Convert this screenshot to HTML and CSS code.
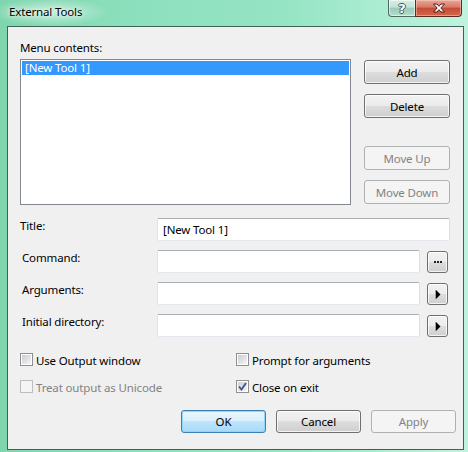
FILE: index.html
```html
<!DOCTYPE html>
<html>
<head>
<meta charset="utf-8">
<link rel="stylesheet" href="styles.css">
</head>
<body>
<div class="window">
  <div class="titlebar">
    <span class="title">External Tools</span>
    <div class="caption-buttons">
      <div class="cap-btn help"><span>?</span></div>
      <div class="cap-btn close">
        <svg width="14" height="10" viewBox="0 0 14 10"><path d="M1.5 1 H5 L7 3.3 L9 1 H12.5 L8.8 5 L12.5 9 H9 L7 6.7 L5 9 H1.5 L5.2 5 Z" fill="#fff" stroke="#4a1c14" stroke-width="1" stroke-linejoin="round"/></svg>
      </div>
    </div>
  </div>
  <div class="client">
    <div class="top">
      <div class="list-col">
        <div class="label">Menu contents:</div>
        <div class="listbox">
          <div class="list-item selected">[New Tool 1]</div>
        </div>
      </div>
      <div class="side-buttons">
        <button class="btn side">Add</button>
        <button class="btn side">Delete</button>
        <button class="btn side disabled move-up">Move Up</button>
        <button class="btn side disabled">Move Down</button>
      </div>
    </div>

    <div class="fields">
      <div class="row">
        <div class="field-label first">Title:</div>
        <div class="textbox wide"><span>[New Tool 1]</span></div>
      </div>
      <div class="row">
        <div class="field-label">Command:</div>
        <div class="textbox"></div>
        <button class="btn small">
          <svg width="8" height="2" viewBox="0 0 8 2"><rect x="0" y="0" width="2" height="2" fill="#222"/><rect x="3" y="0" width="2" height="2" fill="#222"/><rect x="6" y="0" width="2" height="2" fill="#222"/></svg>
        </button>
      </div>
      <div class="row">
        <div class="field-label">Arguments:</div>
        <div class="textbox"></div>
        <button class="btn small">
          <svg width="6" height="9" viewBox="0 0 6 9"><rect x="0" y="0" width="1" height="9" fill="#e0902c"/><path d="M1 0 L5.5 4.5 L1 9 Z" fill="#000"/></svg>
        </button>
      </div>
      <div class="row">
        <div class="field-label">Initial directory:</div>
        <div class="textbox"></div>
        <button class="btn small">
          <svg width="6" height="9" viewBox="0 0 6 9"><rect x="0" y="0" width="1" height="9" fill="#e0902c"/><path d="M1 0 L5.5 4.5 L1 9 Z" fill="#000"/></svg>
        </button>
      </div>
    </div>

    <div class="checks">
      <label class="check"><span class="box"></span>Use Output window</label>
      <label class="check"><span class="box"></span>Prompt for arguments</label>
      <label class="check disabled"><span class="box"></span>Treat output as Unicode</label>
      <label class="check"><span class="box checked"><svg width="9" height="9" viewBox="0 0 9 9"><path d="M1 4.5 L3.5 7.5 L8 1" fill="none" stroke="#3d5596" stroke-width="1.8"/></svg></span>Close on exit</label>
    </div>

    <div class="dialog-buttons">
      <button class="btn dlg default">OK</button>
      <button class="btn dlg">Cancel</button>
      <button class="btn dlg disabled">Apply</button>
    </div>
  </div>
</div>
</body>
</html>
```

FILE: styles.css
```css
html, body {
  margin: 0;
  padding: 0;
}
body {
  width: 468px;
  height: 452px;
  overflow: hidden;
  font-family: "Noto Sans", "DejaVu Sans", sans-serif;
  font-size: 11.5px;
  letter-spacing: -0.15px;
  color: #000;
}
.window {
  width: 468px;
  height: 452px;
  box-sizing: border-box;
  padding: 0 4px 2px 7px;
  display: flex;
  flex-direction: column;
  background:
    radial-gradient(ellipse 60px 14px at 50px 12px, rgba(255,255,255,0.55), rgba(255,255,255,0) 100%),
    linear-gradient(90deg, #7fd6ae 0%, #8de0bd 30%, #95e4c4 60%, #aeeed5 85%, #c0f3df 100%);
}
.titlebar {
  height: 26px;
  display: flex;
  align-items: flex-start;
}
.title {
  margin-top: 4px;
  margin-left: 2px;
  line-height: 15px;
  text-shadow: 0 0 6px rgba(255,255,255,0.9), 0 0 3px rgba(255,255,255,0.8);
}
.caption-buttons {
  margin-left: auto;
  margin-right: 2px;
  display: flex;
}
.cap-btn {
  height: 17px;
  box-sizing: border-box;
  display: flex;
  align-items: center;
  justify-content: center;
  border: 1px solid #4d6b60;
  border-top: none;
}
.cap-btn.help {
  width: 27px;
  border-radius: 0 0 0 4px;
  border-right: none;
  background: linear-gradient(#d6efe6 0%, #c1e3d6 45%, #9ccbb8 50%, #b3dccb 100%);
  box-shadow: inset 0 0 0 1px rgba(255,255,255,0.55);
}
.cap-btn.help span {
  font-family: "DejaVu Sans", sans-serif;
  font-weight: bold;
  font-size: 13px;
  line-height: 13px;
  letter-spacing: 0;
  color: #fff;
  text-shadow: 1px 0 0 #3e5a50, -1px 0 0 #3e5a50, 0 1px 0 #3e5a50, 0 -1px 0 #3e5a50;
}
.cap-btn.close {
  width: 47px;
  border-radius: 0 0 4px 0;
  border-color: #5e2a20;
  background: linear-gradient(#e8a898 0%, #d97865 45%, #c74a32 50%, #d2674f 100%);
  box-shadow: inset 0 0 0 1px rgba(255,220,210,0.45);
}
.client {
  flex: 1;
  background: #f0f0f0;
  border: 1px solid #3e6256;
  padding: 13px 0 0 12px;
  box-sizing: border-box;
}
.top {
  display: flex;
  gap: 13px;
}
.list-col {
  width: 331px;
}
.label {
  line-height: 15px;
  height: 15px;
}
.listbox {
  margin-top: 4px;
  height: 146px;
  box-sizing: border-box;
  border: 1px solid #828790;
  background: #fff;
  padding: 1px;
}
.list-item {
  height: 14px;
  line-height: 14px;
  padding-left: 3px;
}
.list-item.selected {
  background: #3399ff;
  color: #fff;
}
.side-buttons {
  display: flex;
  flex-direction: column;
  gap: 10px;
  padding-top: 20px;
}
.side-buttons .move-up {
  margin-top: 18px;
}
.btn {
  font-family: inherit;
  font-size: 11.5px;
  letter-spacing: -0.15px;
  color: #000;
  box-sizing: border-box;
  border: 1px solid #707070;
  border-radius: 3px;
  background: linear-gradient(#f2f2f2 0%, #ebebeb 48%, #dddddd 50%, #cfcfcf 100%);
  box-shadow: inset 0 0 0 1px rgba(255,255,255,0.75);
  padding: 0;
  margin: 0;
  display: flex;
  align-items: center;
  justify-content: center;
}
.btn.disabled {
  border-color: #adb2b5;
  background: #f4f4f4;
  color: #838383;
  box-shadow: none;
}
.btn.default {
  border-color: #3c7fb1;
  background: linear-gradient(#eaf6fd 0%, #d9f0fc 48%, #bee6fd 50%, #a7d9f5 100%);
  box-shadow: inset 0 0 0 1px #8fd8f8;
}
.btn.side {
  width: 86px;
  height: 24px;
}
.fields {
  margin-top: 13px;
  display: flex;
  flex-direction: column;
  gap: 9px;
}
.row {
  display: flex;
  align-items: flex-start;
  height: 23px;
}
.field-label {
  width: 135px;
  padding-left: 2px;
  line-height: 15px;
}
.field-label.first {
  padding-left: 0;
  width: 137px;
}
.textbox {
  width: 263px;
  height: 23px;
  box-sizing: border-box;
  background: #fff;
  border: 1px solid;
  border-color: #abadb3 #dbdfe6 #e3e9ef #e2e3ea;
  border-radius: 2px;
  padding: 3px 0 0 5px;
  line-height: 15px;
}
.textbox.wide {
  width: 293px;
}
.btn.small {
  width: 21px;
  height: 22px;
  margin-left: 7px;
  margin-top: 1px;
}
.btn.small svg {
  display: block;
}
.checks {
  margin-top: 16px;
  display: grid;
  grid-template-columns: 216px 200px;
  row-gap: 12px;
}
.check {
  display: flex;
  align-items: flex-start;
  line-height: 15px;
  height: 15px;
}
.box {
  width: 13px;
  height: 13px;
  box-sizing: border-box;
  border: 1px solid #8e8f8f;
  background: #fff;
  padding: 1px;
  margin-right: 3px;
  display: block;
  position: relative;
}
.box::before {
  content: "";
  display: block;
  width: 9px;
  height: 9px;
  background: linear-gradient(135deg, #cbcfd5 0%, #e2e4e7 60%, #f6f6f6 100%);
  border: none;
}
.box.checked svg {
  position: absolute;
  left: 1px;
  top: 1px;
}
.check.disabled {
  color: #838383;
}
.check.disabled .box {
  border-color: #bcbcbc;
  background: #f4f4f4;
}
.check.disabled .box::before {
  background: #f4f4f4;
}
.dialog-buttons {
  margin-top: 15px;
  margin-left: 161px;
  display: flex;
  gap: 10px;
}
.btn.dlg {
  width: 85px;
  height: 23px;
}
```
